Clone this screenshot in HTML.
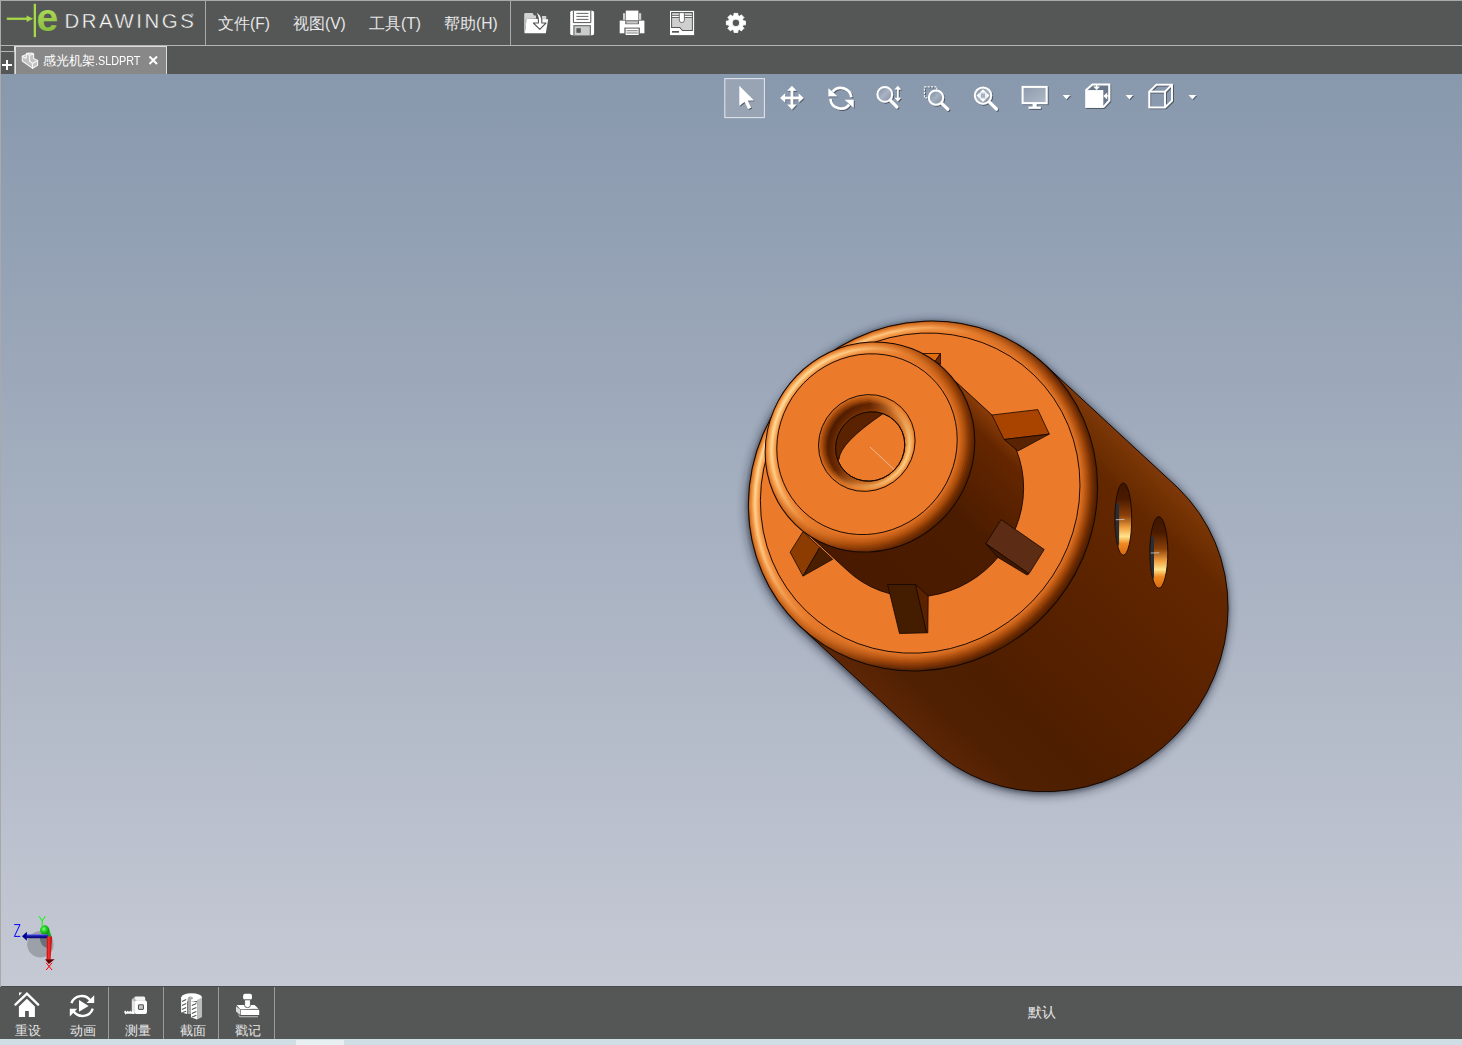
<!DOCTYPE html>
<html><head><meta charset="utf-8">
<style>
html,body{margin:0;padding:0;}
body{width:1462px;height:1045px;position:relative;overflow:hidden;background:#555756;font-family:"Liberation Sans",sans-serif;}
.abs{position:absolute;}
#topborder{left:0;top:0;width:1462px;height:1px;background:#a9a9a9;}
#leftborder{left:0;top:0;width:1px;height:987px;background:#a9a9a9;}
#sep1{left:205px;top:1px;width:1px;height:44px;background:#aaaaaa;}
#sep2{left:510px;top:1px;width:1px;height:44px;background:#aaaaaa;}
#hline{left:0;top:45px;width:1462px;height:1px;background:#b4b4b4;}
.menu{top:14px;color:#e6e6e6;font-size:15.6px;line-height:20px;white-space:nowrap;}
#tab{left:14px;top:46px;width:153px;height:28px;background:#888888;border-left:2px solid #dedede;border-right:1px solid #dcdcdc;border-top:1px solid #dcdcdc;box-sizing:border-box;}
#plustab{left:1px;top:51px;width:14px;height:23px;border-top:1px solid #b4b4b4;border-right:1px solid #b4b4b4;border-top-right-radius:2px;box-sizing:border-box;}
#viewport{left:1px;top:74px;width:1461px;height:912px;background:linear-gradient(#8898ad 0%,#c5c9d4 100%);}
#bottombar{left:1px;top:986px;width:1461px;height:53px;background:#555756;border-top:1px solid #4a4c4b;box-sizing:border-box;}
#bstrip{left:0;top:1039px;width:1462px;height:6px;background:#cfdde5;}
.bsep{top:987px;width:1px;height:52px;background:#9a9a9a;}
.blabel{top:1022px;color:#e8e8e8;font-size:13px;line-height:17px;white-space:nowrap;}
</style></head><body>
<div id="topborder" class="abs"></div>
<div id="leftborder" class="abs"></div>
<div id="sep1" class="abs"></div>
<div id="sep2" class="abs"></div>
<div id="hline" class="abs"></div>

<svg class="abs" style="left:0;top:0" width="205" height="45" viewBox="0 0 205 45">
  <defs>
    <linearGradient id="eg" x1="0" y1="0" x2="0" y2="1">
      <stop offset="0" stop-color="#c0ec64"/>
      <stop offset="1" stop-color="#7eb236"/>
    </linearGradient>
  </defs>
  <rect x="6.8" y="17.6" width="21" height="2.3" fill="#a6d84a"/>
  <path d="M26.6 15.6 L33.2 18.75 L26.6 21.9 Z" fill="#a6d84a"/>
  <rect x="33.7" y="3.8" width="2.3" height="33.3" fill="#a6d84a"/>
  <text x="36.5" y="31" font-family="Liberation Sans" font-weight="bold" font-size="39" fill="url(#eg)">e</text>
  <text x="64.5" y="28" font-family="Liberation Sans" font-size="20.4" fill="#ffffff" stroke="#555756" stroke-width="0.45" letter-spacing="2.55">DRAWINGS</text>
  <circle cx="192" cy="14.8" r="1.6" fill="#9a9a9a"/>
</svg>
<div class="abs menu" style="left:218px">文件(F)</div>
<div class="abs menu" style="left:293px">视图(V)</div>
<div class="abs menu" style="left:369px">工具(T)</div>
<div class="abs menu" style="left:444px">帮助(H)</div>

<!--TOPICONS--><svg class="abs" style="left:515px;top:0" width="250" height="45" viewBox="515 0 250 45">
  <!-- open folder -->
  <g>
    <path d="M524.2 33.2 L524.2 14.2 Q524.2 13 525.4 13 L532.6 13 L534 15.6 L536 15.6 L536 18.6 L527 18.6 Z" fill="#d2d2d2"/>
    <path d="M541.8 16 L546.2 16 L546.2 19 L541.8 19 Z" fill="#d2d2d2"/>
    <path d="M526.6 18.4 L548.2 19.2 L545.8 33.2 L524.8 33.2 Z" fill="#ffffff"/>
    <path d="M524.6 18.6 L526.6 18.4 L524.8 33.2 L524.2 33.2 Z" fill="#bdbdbd"/>
    <path d="M535.2 11.6 Q542.8 14.5 541.8 23 L546 23 L539.8 29.4 L533.4 23 L538.4 23 Q539 16.5 535.2 11.6 Z" fill="#ffffff" stroke="#555756" stroke-width="1.1" stroke-linejoin="round"/>
  </g>
  <!-- save -->
  <g>
    <rect x="570.2" y="10.8" width="23.9" height="24.4" rx="1.8" fill="#ffffff"/>
    <path d="M573.4 10.8 L573.4 22.6 L590.8 22.6 L590.8 10.8" fill="none" stroke="#555756" stroke-width="1"/>
    <rect x="573.4" y="25.2" width="17.4" height="10" fill="#555756"/>
    <rect x="574.4" y="26.2" width="15.4" height="9" fill="#cbcbcb"/>
    <rect x="576.4" y="28.2" width="4.4" height="4.6" fill="#555756"/>
    <rect x="576.4" y="12.9" width="12" height="0.9" fill="#555756"/>
    <rect x="576.4" y="15.9" width="12" height="0.9" fill="#555756"/>
    <rect x="576.4" y="18.9" width="12" height="0.9" fill="#555756"/>
  </g>
  <!-- print -->
  <g>
    <rect x="623" y="13.2" width="2.2" height="6.6" fill="#d0d0d0"/>
    <rect x="639" y="13.2" width="2.2" height="6.6" fill="#d0d0d0"/>
    <rect x="625.8" y="10.6" width="12.6" height="9.6" fill="#ffffff"/>
    <rect x="619.7" y="20.6" width="24.7" height="12.7" fill="#ffffff"/>
    <rect x="625.3" y="20.6" width="13.6" height="3.6" fill="#555756"/>
    <rect x="626.3" y="21.2" width="11.6" height="2.4" fill="#c8c8c8"/>
    <rect x="624.4" y="27.6" width="15.4" height="7.7" fill="#555756"/>
    <rect x="625.6" y="28.6" width="13" height="6.4" fill="#ffffff"/>
    <rect x="626.4" y="30.4" width="11.4" height="0.8" fill="#555756"/>
    <rect x="626.4" y="32.6" width="11.4" height="0.8" fill="#555756"/>
  </g>
  <!-- 3d print -->
  <g>
    <rect x="670" y="10.9" width="24.1" height="24.2" fill="#ffffff"/>
    <path d="M671.1 12.1 L692.9 12.1 L692.9 30.9 L682.2 30.9 L679.6 28 L671.1 28 Z" fill="#555756"/>
    <rect x="672.1" y="13.1" width="19.8" height="2.1" fill="#cfcfcf"/>
    <rect x="672.1" y="15.9" width="19.8" height="1.2" fill="#ffffff"/>
    <path d="M672.1 17.9 L691.9 17.9 L691.9 29.9 L682.6 29.9 L680 27 L672.1 27 Z" fill="#cfcfcf"/>
    <path d="M679.3 12.6 L684.4 12.6 L684.4 20 Q684.4 22.6 681.85 22.6 Q679.3 22.6 679.3 20 Z" fill="#ffffff" stroke="#555756" stroke-width="0.8"/>
    <rect x="672" y="31" width="7" height="1.7" fill="#555756"/>
  </g>
  <!-- gear -->
  <g transform="translate(735.9 22.9)">
    <path d="M7.34 -1.95 L9.51 -1.93 L9.51 1.93 L7.34 1.95 L6.57 3.81 L8.08 5.36 L5.36 8.08 L3.81 6.57 L1.95 7.34 L1.93 9.51 L-1.93 9.51 L-1.95 7.34 L-3.81 6.57 L-5.36 8.08 L-8.08 5.36 L-6.57 3.81 L-7.34 1.95 L-9.51 1.93 L-9.51 -1.93 L-7.34 -1.95 L-6.57 -3.81 L-8.08 -5.36 L-5.36 -8.08 L-3.81 -6.57 L-1.95 -7.34 L-1.93 -9.51 L1.93 -9.51 L1.95 -7.34 L3.81 -6.57 L5.36 -8.08 L8.08 -5.36 L6.57 -3.81 Z M3.8 0 A3.8 3.8 0 1 0 -3.8 0 A3.8 3.8 0 1 0 3.8 0 Z" fill="#ffffff" fill-rule="evenodd" stroke="#ffffff" stroke-width="0.9" stroke-linejoin="round"/>
  </g>
</svg><!--/TOPICONS-->
<div id="tab" class="abs"></div>
<div id="plustab" class="abs"></div>
<div class="abs" style="left:2px;top:64px;width:10px;height:2px;background:#fff"></div>
<div class="abs" style="left:6px;top:60px;width:2px;height:10px;background:#fff"></div>
<svg class="abs" style="left:18px;top:49px" width="24" height="24" viewBox="0 0 24 24">
  <g stroke="#f6f6f6" stroke-width="1.1" stroke-linejoin="round" stroke-linecap="round" fill="none">
    <path d="M4.3 7.2 L8.3 5.6 L8.6 4.4 L13.8 4.1 L15.6 5 L15.6 9.6 L19.6 11.6 L19.6 16.2 L14.6 19.4 L4.3 12 Z" fill="#c2c2c2"/>
    <path d="M8.6 4.6 L11.6 6.2 L15.6 5 M11.6 6.2 L11.6 12.2 L14.4 14.4 L19.6 11.6 M14.4 14.4 L14.6 19.4 M4.3 7.2 L7.5 9.2 L8.4 8.6 L8.3 5.6"/>
  </g>
</svg>
<div class="abs" style="left:43px;top:52px;font-size:12.5px;line-height:18px;color:#ffffff;white-space:nowrap">感光机架<span style="display:inline-block;font-size:13.5px;transform:scaleX(0.8);transform-origin:0 50%">.SLDPRT</span></div>
<svg class="abs" style="left:148px;top:55px" width="11" height="11" viewBox="0 0 11 11"><path d="M1.5 1.5 L9 9 M9 1.5 L1.5 9" stroke="#fff" stroke-width="2"/></svg>

<div id="viewport" class="abs"></div>
<!--MODEL--><svg class="abs" style="left:0;top:0" width="1462" height="1045" viewBox="0 0 1462 1045">
<defs><linearGradient id="gBody" gradientUnits="userSpaceOnUse" x1="1178.0" y1="487.9" x2="929.4" y2="746.1"><stop offset="0" stop-color="#80380a"/><stop offset="0.035" stop-color="#763404"/><stop offset="0.12" stop-color="#642800"/><stop offset="0.4" stop-color="#5a2200"/><stop offset="0.75" stop-color="#4e1e00"/><stop offset="0.9" stop-color="#502002"/><stop offset="1" stop-color="#5c2606"/></linearGradient>
<linearGradient id="gNeck" gradientUnits="userSpaceOnUse" x1="994.1" y1="417.0" x2="846.9" y2="570.0"><stop offset="0" stop-color="#8a3c08"/><stop offset="0.1" stop-color="#642600"/><stop offset="0.45" stop-color="#4c1c00"/><stop offset="1" stop-color="#4a1a00"/></linearGradient>
<filter id="fShadow2" x="-20%" y="-20%" width="140%" height="140%"><feGaussianBlur stdDeviation="2.2"/></filter>
<filter id="fShadow" x="-20%" y="-20%" width="140%" height="140%"><feGaussianBlur stdDeviation="5.5"/></filter>
<clipPath id="cHole"><ellipse cx="870.20" cy="446.50" rx="35.50" ry="33.73" transform="rotate(-46.1 870.20 446.50)" /></clipPath>
<linearGradient id="rg1" gradientUnits="userSpaceOnUse" x1="878.2" y1="316.8" x2="967.8" y2="675.2"><stop offset="0.0" stop-color="#d06a1c"/><stop offset="0.2" stop-color="#c86418"/><stop offset="0.4" stop-color="#b85810"/><stop offset="0.65" stop-color="#5a2404"/><stop offset="1.0" stop-color="#4a1c00"/></linearGradient>
<linearGradient id="rg2" gradientUnits="userSpaceOnUse" x1="878.3" y1="317.8" x2="967.2" y2="673.7"><stop offset="0.0" stop-color="#dd7c2d"/><stop offset="0.2" stop-color="#d47124"/><stop offset="0.4" stop-color="#c15f16"/><stop offset="0.65" stop-color="#6a2b05"/><stop offset="1.0" stop-color="#552000"/></linearGradient>
<linearGradient id="rg3" gradientUnits="userSpaceOnUse" x1="878.4" y1="318.9" x2="966.7" y2="672.2"><stop offset="0.0" stop-color="#e98e3d"/><stop offset="0.2" stop-color="#e07f30"/><stop offset="0.4" stop-color="#cb651c"/><stop offset="0.65" stop-color="#7a3307"/><stop offset="1.0" stop-color="#5f2400"/></linearGradient>
<linearGradient id="rg4" gradientUnits="userSpaceOnUse" x1="878.4" y1="319.9" x2="966.1" y2="670.7"><stop offset="0.0" stop-color="#f6a04e"/><stop offset="0.2" stop-color="#ec8c3c"/><stop offset="0.4" stop-color="#d46c22"/><stop offset="0.65" stop-color="#8a3a08"/><stop offset="1.0" stop-color="#6a2800"/></linearGradient>
<linearGradient id="rg5" gradientUnits="userSpaceOnUse" x1="878.5" y1="320.9" x2="965.6" y2="669.2"><stop offset="0.0" stop-color="#f9b66b"/><stop offset="0.2" stop-color="#f29e51"/><stop offset="0.4" stop-color="#d97125"/><stop offset="0.65" stop-color="#97410b"/><stop offset="1.0" stop-color="#7a3103"/></linearGradient>
<linearGradient id="rg6" gradientUnits="userSpaceOnUse" x1="878.6" y1="321.9" x2="965.1" y2="667.7"><stop offset="0.0" stop-color="#fccc87"/><stop offset="0.2" stop-color="#f9b065"/><stop offset="0.4" stop-color="#df7729"/><stop offset="0.65" stop-color="#a3490d"/><stop offset="1.0" stop-color="#8a3b05"/></linearGradient>
<linearGradient id="rg7" gradientUnits="userSpaceOnUse" x1="878.7" y1="323.0" x2="964.5" y2="666.1"><stop offset="0.0" stop-color="#ffe2a4"/><stop offset="0.2" stop-color="#ffc27a"/><stop offset="0.4" stop-color="#e47c2c"/><stop offset="0.65" stop-color="#b05010"/><stop offset="1.0" stop-color="#9a4408"/></linearGradient>
<linearGradient id="rg8" gradientUnits="userSpaceOnUse" x1="878.8" y1="324.0" x2="964.0" y2="664.6"><stop offset="0.0" stop-color="#fdd38f"/><stop offset="0.2" stop-color="#fbb56a"/><stop offset="0.4" stop-color="#e57b2b"/><stop offset="0.65" stop-color="#bb5915"/><stop offset="1.0" stop-color="#a94d0d"/></linearGradient>
<linearGradient id="rg9" gradientUnits="userSpaceOnUse" x1="878.9" y1="325.0" x2="963.4" y2="663.1"><stop offset="0.0" stop-color="#fcc37b"/><stop offset="0.2" stop-color="#f7a75a"/><stop offset="0.4" stop-color="#e77b2b"/><stop offset="0.65" stop-color="#c5611b"/><stop offset="1.0" stop-color="#b95713"/></linearGradient>
<linearGradient id="rg10" gradientUnits="userSpaceOnUse" x1="879.0" y1="326.0" x2="962.9" y2="661.6"><stop offset="0.0" stop-color="#fab466"/><stop offset="0.2" stop-color="#f39a4a"/><stop offset="0.4" stop-color="#e87a2a"/><stop offset="0.65" stop-color="#d06a20"/><stop offset="1.0" stop-color="#c86018"/></linearGradient>
<linearGradient id="rg11" gradientUnits="userSpaceOnUse" x1="879.0" y1="327.1" x2="962.3" y2="660.1"><stop offset="0.0" stop-color="#f5a153"/><stop offset="0.2" stop-color="#f18f40"/><stop offset="0.4" stop-color="#e97a2a"/><stop offset="0.65" stop-color="#d86f23"/><stop offset="1.0" stop-color="#d3681e"/></linearGradient>
<linearGradient id="rg12" gradientUnits="userSpaceOnUse" x1="879.1" y1="328.1" x2="961.8" y2="658.6"><stop offset="0.0" stop-color="#f18f3f"/><stop offset="0.2" stop-color="#ee8535"/><stop offset="0.4" stop-color="#eb7a2b"/><stop offset="0.65" stop-color="#e07327"/><stop offset="1.0" stop-color="#dd7024"/></linearGradient>
<linearGradient id="rg13" gradientUnits="userSpaceOnUse" x1="879.2" y1="329.1" x2="961.2" y2="657.1"><stop offset="0.0" stop-color="#ec7c2c"/><stop offset="0.2" stop-color="#ec7a2b"/><stop offset="0.4" stop-color="#ec7a2b"/><stop offset="0.65" stop-color="#e8782a"/><stop offset="1.0" stop-color="#e8782a"/></linearGradient>
<linearGradient id="rg14" gradientUnits="userSpaceOnUse" x1="843.1" y1="339.4" x2="896.9" y2="554.6"><stop offset="0.0" stop-color="#e27626"/><stop offset="0.2" stop-color="#dc7020"/><stop offset="0.42" stop-color="#c45e16"/><stop offset="0.65" stop-color="#7a3006"/><stop offset="1.0" stop-color="#4a1c00"/></linearGradient>
<linearGradient id="rg15" gradientUnits="userSpaceOnUse" x1="843.2" y1="340.6" x2="896.2" y2="552.8"><stop offset="0.0" stop-color="#ec8f3d"/><stop offset="0.2" stop-color="#e68232"/><stop offset="0.42" stop-color="#cc651c"/><stop offset="0.65" stop-color="#893a07"/><stop offset="1.0" stop-color="#572100"/></linearGradient>
<linearGradient id="rg16" gradientUnits="userSpaceOnUse" x1="843.2" y1="341.8" x2="895.5" y2="551.0"><stop offset="0.0" stop-color="#f5a854"/><stop offset="0.2" stop-color="#ef9343"/><stop offset="0.42" stop-color="#d46c21"/><stop offset="0.65" stop-color="#984308"/><stop offset="1.0" stop-color="#642600"/></linearGradient>
<linearGradient id="rg17" gradientUnits="userSpaceOnUse" x1="843.3" y1="343.1" x2="894.9" y2="549.3"><stop offset="0.0" stop-color="#fbbd6e"/><stop offset="0.2" stop-color="#f6a556"/><stop offset="0.42" stop-color="#db7326"/><stop offset="0.65" stop-color="#a64c0a"/><stop offset="1.0" stop-color="#752e02"/></linearGradient>
<linearGradient id="rg18" gradientUnits="userSpaceOnUse" x1="843.4" y1="344.3" x2="894.2" y2="547.5"><stop offset="0.0" stop-color="#fdd089"/><stop offset="0.2" stop-color="#fbb66b"/><stop offset="0.42" stop-color="#e07a2b"/><stop offset="0.65" stop-color="#b3530f"/><stop offset="1.0" stop-color="#8a3b05"/></linearGradient>
<linearGradient id="rg19" gradientUnits="userSpaceOnUse" x1="843.5" y1="345.5" x2="893.5" y2="545.7"><stop offset="0.0" stop-color="#ffe2a4"/><stop offset="0.2" stop-color="#ffc880"/><stop offset="0.42" stop-color="#e68030"/><stop offset="0.65" stop-color="#c05a14"/><stop offset="1.0" stop-color="#a04808"/></linearGradient>
<linearGradient id="rg20" gradientUnits="userSpaceOnUse" x1="843.6" y1="346.7" x2="892.9" y2="543.9"><stop offset="0.0" stop-color="#fcd08a"/><stop offset="0.2" stop-color="#fbb66b"/><stop offset="0.42" stop-color="#e77e2e"/><stop offset="0.65" stop-color="#ca6119"/><stop offset="1.0" stop-color="#b0520e"/></linearGradient>
<linearGradient id="rg21" gradientUnits="userSpaceOnUse" x1="843.6" y1="347.9" x2="892.2" y2="542.1"><stop offset="0.0" stop-color="#f9bd71"/><stop offset="0.2" stop-color="#f6a556"/><stop offset="0.42" stop-color="#e87d2d"/><stop offset="0.65" stop-color="#d3681e"/><stop offset="1.0" stop-color="#c05b15"/></linearGradient>
<linearGradient id="rg22" gradientUnits="userSpaceOnUse" x1="843.7" y1="349.2" x2="891.5" y2="540.4"><stop offset="0.0" stop-color="#f6a959"/><stop offset="0.2" stop-color="#f29545"/><stop offset="0.42" stop-color="#e97c2c"/><stop offset="0.65" stop-color="#db6e22"/><stop offset="1.0" stop-color="#ce651c"/></linearGradient>
<linearGradient id="rg23" gradientUnits="userSpaceOnUse" x1="843.8" y1="350.4" x2="890.8" y2="538.6"><stop offset="0.0" stop-color="#f19242"/><stop offset="0.2" stop-color="#ef8838"/><stop offset="0.42" stop-color="#ea7b2b"/><stop offset="0.65" stop-color="#e27326"/><stop offset="1.0" stop-color="#db6e23"/></linearGradient>
<linearGradient id="rg24" gradientUnits="userSpaceOnUse" x1="843.9" y1="351.6" x2="890.1" y2="536.8"><stop offset="0.0" stop-color="#ec7c2c"/><stop offset="0.2" stop-color="#ec7a2b"/><stop offset="0.42" stop-color="#ec7a2b"/><stop offset="0.65" stop-color="#e8782a"/><stop offset="1.0" stop-color="#e8782a"/></linearGradient>
<linearGradient id="rg25" gradientUnits="userSpaceOnUse" x1="851.9" y1="393.4" x2="881.7" y2="492.6"><stop offset="0.0" stop-color="#c8621a"/><stop offset="0.3" stop-color="#d8701e"/><stop offset="0.6" stop-color="#e47826"/><stop offset="1.0" stop-color="#e87a28"/></linearGradient>
<linearGradient id="rg26" gradientUnits="userSpaceOnUse" x1="852.6" y1="394.9" x2="881.6" y2="491.7"><stop offset="0.0" stop-color="#b35513"/><stop offset="0.3" stop-color="#c86418"/><stop offset="0.6" stop-color="#e57e2c"/><stop offset="1.0" stop-color="#ed8c3b"/></linearGradient>
<linearGradient id="rg27" gradientUnits="userSpaceOnUse" x1="853.2" y1="396.3" x2="881.5" y2="490.8"><stop offset="0.0" stop-color="#9f470d"/><stop offset="0.3" stop-color="#b85812"/><stop offset="0.6" stop-color="#e78432"/><stop offset="1.0" stop-color="#f39e4d"/></linearGradient>
<linearGradient id="rg28" gradientUnits="userSpaceOnUse" x1="853.8" y1="397.8" x2="881.5" y2="489.9"><stop offset="0.0" stop-color="#8a3a06"/><stop offset="0.3" stop-color="#a84c0c"/><stop offset="0.6" stop-color="#e88a38"/><stop offset="1.0" stop-color="#f8b060"/></linearGradient>
<linearGradient id="rg29" gradientUnits="userSpaceOnUse" x1="854.5" y1="399.3" x2="881.4" y2="489.1"><stop offset="0.0" stop-color="#752f04"/><stop offset="0.3" stop-color="#913f08"/><stop offset="0.6" stop-color="#e38738"/><stop offset="1.0" stop-color="#fabd70"/></linearGradient>
<linearGradient id="rg30" gradientUnits="userSpaceOnUse" x1="855.1" y1="400.7" x2="881.3" y2="488.2"><stop offset="0.0" stop-color="#5f2502"/><stop offset="0.3" stop-color="#793104"/><stop offset="0.6" stop-color="#dd8338"/><stop offset="1.0" stop-color="#fdcb80"/></linearGradient>
<linearGradient id="rg31" gradientUnits="userSpaceOnUse" x1="855.7" y1="402.2" x2="881.3" y2="487.3"><stop offset="0.0" stop-color="#4a1a00"/><stop offset="0.3" stop-color="#622400"/><stop offset="0.6" stop-color="#d88038"/><stop offset="1.0" stop-color="#ffd890"/></linearGradient>
<linearGradient id="rg32" gradientUnits="userSpaceOnUse" x1="856.4" y1="403.7" x2="881.2" y2="486.4"><stop offset="0.0" stop-color="#4f1d00"/><stop offset="0.3" stop-color="#662601"/><stop offset="0.6" stop-color="#d37930"/><stop offset="1.0" stop-color="#fdc87b"/></linearGradient>
<linearGradient id="rg33" gradientUnits="userSpaceOnUse" x1="857.0" y1="405.1" x2="881.1" y2="485.5"><stop offset="0.0" stop-color="#551f00"/><stop offset="0.3" stop-color="#6a2801"/><stop offset="0.6" stop-color="#cd7128"/><stop offset="1.0" stop-color="#fab865"/></linearGradient>
<linearGradient id="rg34" gradientUnits="userSpaceOnUse" x1="857.6" y1="406.6" x2="881.1" y2="484.6"><stop offset="0.0" stop-color="#5a2200"/><stop offset="0.3" stop-color="#6e2a02"/><stop offset="0.6" stop-color="#c86a20"/><stop offset="1.0" stop-color="#f8a850"/></linearGradient>
<linearGradient id="rg35" gradientUnits="userSpaceOnUse" x1="858.3" y1="408.1" x2="881.0" y2="483.8"><stop offset="0.0" stop-color="#652701"/><stop offset="0.3" stop-color="#772f04"/><stop offset="0.6" stop-color="#c5651c"/><stop offset="1.0" stop-color="#f09540"/></linearGradient>
<linearGradient id="rg36" gradientUnits="userSpaceOnUse" x1="858.9" y1="409.5" x2="880.9" y2="482.9"><stop offset="0.0" stop-color="#6f2d03"/><stop offset="0.3" stop-color="#813506"/><stop offset="0.6" stop-color="#c36118"/><stop offset="1.0" stop-color="#e88330"/></linearGradient>
<linearGradient id="rg37" gradientUnits="userSpaceOnUse" x1="859.6" y1="411.0" x2="880.9" y2="482.0"><stop offset="0.0" stop-color="#7a3204"/><stop offset="0.3" stop-color="#8a3a08"/><stop offset="0.6" stop-color="#c05c14"/><stop offset="1.0" stop-color="#e07020"/></linearGradient>
<linearGradient id="gSlot" x1="0" y1="0" x2="0" y2="1"><stop offset="0" stop-color="#3e1600"/><stop offset="0.22" stop-color="#4a1a00"/><stop offset="0.45" stop-color="#8a4008"/><stop offset="0.62" stop-color="#f0a040"/><stop offset="0.74" stop-color="#ffe48c"/><stop offset="0.84" stop-color="#f08820"/><stop offset="1" stop-color="#d86810"/></linearGradient>
<clipPath id="cSlot0"><ellipse cx="1123.3" cy="519.1" rx="8.4" ry="36.1"/></clipPath>
<clipPath id="cSlot1"><ellipse cx="1158.8" cy="552.4" rx="9.0" ry="35.8"/></clipPath></defs>
<path d="M798.74 625.12 A179.20 170.24 -46.1 0 1 1047.26 366.88 L1177.96 487.88 A179.20 170.24 -46.1 0 1 929.44 746.12 Z" fill="#1e2430" opacity="0.85" filter="url(#fShadow)" transform="translate(-1 2)"/>
<path d="M798.74 625.12 A179.20 170.24 -46.1 0 1 1047.26 366.88 L1177.96 487.88 A179.20 170.24 -46.1 0 1 929.44 746.12 Z" fill="#1a1e28" opacity="0.45" filter="url(#fShadow2)"/>
<path d="M798.74 625.12 A179.20 170.24 -46.1 0 1 1047.26 366.88 L1177.96 487.88 A179.20 170.24 -46.1 0 1 929.44 746.12 Z" fill="url(#gBody)" stroke="#140800" stroke-width="1"/>
<ellipse cx="923.00" cy="496.00" rx="179.20" ry="170.24" transform="rotate(-46.1 923.00 496.00)" fill="url(#rg1)"/>
<ellipse cx="922.77" cy="495.76" rx="177.93" ry="169.04" transform="rotate(-46.1 922.77 495.76)" fill="url(#rg2)"/>
<ellipse cx="922.53" cy="495.52" rx="176.67" ry="167.83" transform="rotate(-46.1 922.53 495.52)" fill="url(#rg3)"/>
<ellipse cx="922.30" cy="495.27" rx="175.40" ry="166.63" transform="rotate(-46.1 922.30 495.27)" fill="url(#rg4)"/>
<ellipse cx="922.07" cy="495.03" rx="174.13" ry="165.43" transform="rotate(-46.1 922.07 495.03)" fill="url(#rg5)"/>
<ellipse cx="921.83" cy="494.79" rx="172.87" ry="164.22" transform="rotate(-46.1 921.83 494.79)" fill="url(#rg6)"/>
<ellipse cx="921.60" cy="494.55" rx="171.60" ry="163.02" transform="rotate(-46.1 921.60 494.55)" fill="url(#rg7)"/>
<ellipse cx="921.37" cy="494.31" rx="170.33" ry="161.82" transform="rotate(-46.1 921.37 494.31)" fill="url(#rg8)"/>
<ellipse cx="921.13" cy="494.07" rx="169.07" ry="160.61" transform="rotate(-46.1 921.13 494.07)" fill="url(#rg9)"/>
<ellipse cx="920.90" cy="493.83" rx="167.80" ry="159.41" transform="rotate(-46.1 920.90 493.83)" fill="url(#rg10)"/>
<ellipse cx="920.67" cy="493.58" rx="166.53" ry="158.21" transform="rotate(-46.1 920.67 493.58)" fill="url(#rg11)"/>
<ellipse cx="920.43" cy="493.34" rx="165.27" ry="157.00" transform="rotate(-46.1 920.43 493.34)" fill="url(#rg12)"/>
<ellipse cx="920.20" cy="493.10" rx="164.00" ry="155.80" transform="rotate(-46.1 920.20 493.10)" fill="url(#rg13)"/>
<ellipse cx="923.00" cy="496.00" rx="179.20" ry="170.24" transform="rotate(-46.1 923.00 496.00)" fill="none" stroke="#140800" stroke-width="1"/>
<ellipse cx="920.20" cy="493.10" rx="164.00" ry="155.80" transform="rotate(-46.1 920.20 493.10)" fill="#ec7a2b" stroke="#140800" stroke-width="0.9"/>
<path d="M796.36 523.52 A106.20 100.89 -46.1 0 1 943.64 370.48 L994.14 416.98 A106.20 100.89 -46.1 0 1 846.86 570.02 Z" fill="url(#gNeck)" stroke="#140800" stroke-width="0.9"/>
<polygon points="922.4,353.5 940.5,353.5 935.0,361.6" fill="#e06c10" stroke="#140800" stroke-width="0.8" stroke-linejoin="round"/>
<polygon points="940.5,353.5 940.5,364.4 935.0,361.6" fill="#6e2a02" stroke="#140800" stroke-width="0.8" stroke-linejoin="round"/>
<polygon points="991.9,415.0 1037.8,409.6 1049.3,434.1 1004.1,439.5" fill="#a84400" stroke="#140800" stroke-width="0.8" stroke-linejoin="round"/>
<polygon points="1004.1,439.5 1049.3,434.1 1017.9,451.0" fill="#5a2404" stroke="#140800" stroke-width="0.8" stroke-linejoin="round"/>
<polygon points="1001.1,519.5 1044.2,549.5 1029.0,573.7 985.8,543.7" fill="#5c2c14" stroke="#140800" stroke-width="0.8" stroke-linejoin="round"/>
<polygon points="985.8,543.7 1029.0,573.7 1027.0,575.0 997.9,557.4" fill="#3e1800" stroke="#140800" stroke-width="0.8" stroke-linejoin="round"/>
<polygon points="887.6,584.5 915.6,584.5 926.7,632.8 899.5,633.5" fill="#441c00" stroke="#140800" stroke-width="0.8" stroke-linejoin="round"/>
<polygon points="915.6,584.5 928.2,596.0 927.8,632.8 926.7,632.8" fill="#5c2200" stroke="#140800" stroke-width="0.8" stroke-linejoin="round"/>
<polygon points="803.0,531.6 819.8,547.4 803.0,576.1 790.1,552.2" fill="#8c3c00" stroke="#140800" stroke-width="0.8" stroke-linejoin="round"/>
<polygon points="819.8,547.4 832.7,559.3 803.0,576.1" fill="#4a1e00" stroke="#140800" stroke-width="0.8" stroke-linejoin="round"/>
<ellipse cx="870.00" cy="447.00" rx="107.60" ry="102.22" transform="rotate(-46.1 870.00 447.00)" fill="url(#rg14)"/>
<ellipse cx="869.70" cy="446.72" rx="106.10" ry="100.79" transform="rotate(-46.1 869.70 446.72)" fill="url(#rg15)"/>
<ellipse cx="869.40" cy="446.44" rx="104.60" ry="99.37" transform="rotate(-46.1 869.40 446.44)" fill="url(#rg16)"/>
<ellipse cx="869.10" cy="446.16" rx="103.10" ry="97.94" transform="rotate(-46.1 869.10 446.16)" fill="url(#rg17)"/>
<ellipse cx="868.80" cy="445.88" rx="101.60" ry="96.52" transform="rotate(-46.1 868.80 445.88)" fill="url(#rg18)"/>
<ellipse cx="868.50" cy="445.60" rx="100.10" ry="95.09" transform="rotate(-46.1 868.50 445.60)" fill="url(#rg19)"/>
<ellipse cx="868.20" cy="445.32" rx="98.60" ry="93.67" transform="rotate(-46.1 868.20 445.32)" fill="url(#rg20)"/>
<ellipse cx="867.90" cy="445.04" rx="97.10" ry="92.24" transform="rotate(-46.1 867.90 445.04)" fill="url(#rg21)"/>
<ellipse cx="867.60" cy="444.76" rx="95.60" ry="90.82" transform="rotate(-46.1 867.60 444.76)" fill="url(#rg22)"/>
<ellipse cx="867.30" cy="444.48" rx="94.10" ry="89.39" transform="rotate(-46.1 867.30 444.48)" fill="url(#rg23)"/>
<ellipse cx="867.00" cy="444.20" rx="92.60" ry="87.97" transform="rotate(-46.1 867.00 444.20)" fill="url(#rg24)"/>
<ellipse cx="870.00" cy="447.00" rx="107.60" ry="102.22" transform="rotate(-46.1 870.00 447.00)" fill="none" stroke="#140800" stroke-width="1"/>
<ellipse cx="867.00" cy="444.20" rx="92.60" ry="87.97" transform="rotate(-46.1 867.00 444.20)" fill="#ec7a2b" stroke="#140800" stroke-width="0.9"/>
<ellipse cx="866.80" cy="443.00" rx="49.60" ry="47.12" transform="rotate(-46.1 866.80 443.00)" fill="url(#rg25)"/>
<ellipse cx="867.08" cy="443.29" rx="48.43" ry="46.00" transform="rotate(-46.1 867.08 443.29)" fill="url(#rg26)"/>
<ellipse cx="867.37" cy="443.58" rx="47.25" ry="44.89" transform="rotate(-46.1 867.37 443.58)" fill="url(#rg27)"/>
<ellipse cx="867.65" cy="443.88" rx="46.08" ry="43.77" transform="rotate(-46.1 867.65 443.88)" fill="url(#rg28)"/>
<ellipse cx="867.93" cy="444.17" rx="44.90" ry="42.65" transform="rotate(-46.1 867.93 444.17)" fill="url(#rg29)"/>
<ellipse cx="868.22" cy="444.46" rx="43.73" ry="41.54" transform="rotate(-46.1 868.22 444.46)" fill="url(#rg30)"/>
<ellipse cx="868.50" cy="444.75" rx="42.55" ry="40.42" transform="rotate(-46.1 868.50 444.75)" fill="url(#rg31)"/>
<ellipse cx="868.78" cy="445.04" rx="41.38" ry="39.31" transform="rotate(-46.1 868.78 445.04)" fill="url(#rg32)"/>
<ellipse cx="869.07" cy="445.33" rx="40.20" ry="38.19" transform="rotate(-46.1 869.07 445.33)" fill="url(#rg33)"/>
<ellipse cx="869.35" cy="445.62" rx="39.02" ry="37.07" transform="rotate(-46.1 869.35 445.62)" fill="url(#rg34)"/>
<ellipse cx="869.63" cy="445.92" rx="37.85" ry="35.96" transform="rotate(-46.1 869.63 445.92)" fill="url(#rg35)"/>
<ellipse cx="869.92" cy="446.21" rx="36.67" ry="34.84" transform="rotate(-46.1 869.92 446.21)" fill="url(#rg36)"/>
<ellipse cx="870.20" cy="446.50" rx="35.50" ry="33.73" transform="rotate(-46.1 870.20 446.50)" fill="url(#rg37)"/>
<ellipse cx="866.80" cy="443.00" rx="49.60" ry="47.12" transform="rotate(-46.1 866.80 443.00)" fill="none" stroke="#140800" stroke-width="0.9"/>
<ellipse cx="870.20" cy="446.50" rx="35.50" ry="33.73" transform="rotate(-46.1 870.20 446.50)" fill="#ec7a2b" stroke="#140800" stroke-width="0.9"/>
<path clip-path="url(#cHole)" d="M882.7 413.9 Q840.15 442.85 839 459.2 L820 470 L800 400 L890 390 Z" fill="#5a2200" stroke="#140800" stroke-width="0.8"/>
<ellipse cx="870.20" cy="446.50" rx="35.50" ry="33.73" transform="rotate(-46.1 870.20 446.50)" fill="none" stroke="#140800" stroke-width="0.9"/>
<line x1="870" y1="447" x2="894" y2="469.4" stroke="#e8d8c8" stroke-width="0.7"/>
<ellipse cx="1123.3" cy="519.1" rx="8.4" ry="36.1" fill="url(#gSlot)"/>
<rect clip-path="url(#cSlot0)" x="1113.8999999999999" y="502.9" width="5.2" height="43.3" rx="2.5" fill="#2a2e34"/>
<line x1="1115.6999999999998" y1="519.7" x2="1124.3999999999999" y2="519.5" stroke="#d0d0d0" stroke-width="0.8"/>
<ellipse cx="1123.3" cy="519.1" rx="8.4" ry="36.1" fill="none" stroke="#140800" stroke-width="0.9"/>
<ellipse cx="1158.8" cy="552.4" rx="9.0" ry="35.8" fill="url(#gSlot)"/>
<rect clip-path="url(#cSlot1)" x="1148.8" y="536.3" width="5.2" height="43.0" rx="2.5" fill="#2a2e34"/>
<line x1="1150.6" y1="553.0" x2="1159.3" y2="552.8" stroke="#d0d0d0" stroke-width="0.8"/>
<ellipse cx="1158.8" cy="552.4" rx="9.0" ry="35.8" fill="none" stroke="#140800" stroke-width="0.9"/>
</svg><!--/MODEL-->
<!--TRIAD--><svg class="abs" style="left:0;top:905px" width="70" height="75" viewBox="0 905 70 75">
  <defs>
    <linearGradient id="tz" x1="0" y1="0" x2="0" y2="1"><stop offset="0" stop-color="#5050ff"/><stop offset="0.45" stop-color="#1a1aa0"/><stop offset="1" stop-color="#000070"/></linearGradient>
    <linearGradient id="tx" x1="0" y1="0" x2="1" y2="0"><stop offset="0" stop-color="#c00000"/><stop offset="0.4" stop-color="#ff3030"/><stop offset="1" stop-color="#b00000"/></linearGradient>
    <radialGradient id="ty" cx="0.4" cy="0.4" r="0.6"><stop offset="0" stop-color="#80ff80"/><stop offset="0.5" stop-color="#20d020"/><stop offset="1" stop-color="#109010"/></radialGradient>
  </defs>
  <circle cx="40.4" cy="944.2" r="13.2" fill="#9ca1a9"/>
  <path d="M48.6 936.6 L39.6 936.6 Q39.8 946.8 48 948.2 Z" fill="#6c7179"/>
  <!-- Y shaft -->
  <path d="M44 931 L49 929 L51.6 936.6 L47 938.4 Z" fill="#18b018"/>
  <circle cx="44.7" cy="929.9" r="4.6" fill="url(#ty)"/>
  <!-- Z arrow -->
  <path d="M26.6 934.4 L48.4 934.4 L48.4 938.2 L26.6 938.2 Z" fill="url(#tz)"/>
  <path d="M22 936.2 L26.9 931.8 L26.9 940.8 Z" fill="#000090"/>
  <!-- X arrow -->
  <path d="M47 936.4 L52 936.4 L50.6 959.6 L46.6 959.6 Z" fill="url(#tx)"/>
  <path d="M45 959.2 L54.7 959.2 L48.8 964.1 Z" fill="#6a0000"/>
  <!-- labels -->
  <path d="M14.2 924.6 L20 924.6 L14.4 936.4 L20.2 936.4" fill="none" stroke="#0000ff" stroke-width="1"/>
  <path d="M39 916.2 L42.2 921 L45.2 916.2 M42.2 921 L42.2 925.6" fill="none" stroke="#00ff00" stroke-width="1"/>
  <path d="M46.2 962.8 L52 970 M52 962.8 L46.2 970" fill="none" stroke="#ff0000" stroke-width="1"/>
</svg><!--/TRIAD-->
<!--VTOOLS--><svg class="abs" style="left:715px;top:74px" width="500" height="50" viewBox="715 74 500 50">
  <defs>
    <filter id="ish" x="-30%" y="-30%" width="160%" height="160%"><feGaussianBlur in="SourceAlpha" stdDeviation="0.7"/><feOffset dx="0.8" dy="0.9"/><feComponentTransfer><feFuncA type="linear" slope="0.45"/></feComponentTransfer><feMerge><feMergeNode/><feMergeNode in="SourceGraphic"/></feMerge></filter>
    <linearGradient id="lensg" x1="0" y1="0" x2="1" y2="1"><stop offset="0" stop-color="#7f8ea2"/><stop offset="0.5" stop-color="#a8b3c2"/><stop offset="1" stop-color="#7f8ea2"/></linearGradient>
    <linearGradient id="scrg" x1="0" y1="0" x2="1" y2="1"><stop offset="0" stop-color="#8e9bad"/><stop offset="1" stop-color="#b0b9c6"/></linearGradient>
  </defs>
  <!-- selected box -->
  <rect x="724.8" y="78.6" width="39.6" height="39" fill="#98a3b4" stroke="#dde2ea" stroke-width="1.1"/>
  <g filter="url(#ish)">
    <!-- cursor -->
    <path d="M739.3 85.8 L753.8 100.3 L747.6 100.6 L751.2 107.6 L748 109 L744.6 101.8 L739.3 105.8 Z" fill="#ffffff"/>
    <!-- move -->
    <g fill="#ffffff">
      <rect x="790.6" y="89" width="2.6" height="17.6"/>
      <rect x="783" y="96.6" width="17.6" height="2.6"/>
      <path d="M791.9 85.8 L796.6 90.8 L787.2 90.8 Z"/>
      <path d="M791.9 109.4 L796.6 104.4 L787.2 104.4 Z"/>
      <path d="M780.1 97.9 L785.1 93.2 L785.1 102.6 Z"/>
      <path d="M803.6 97.9 L798.6 93.2 L798.6 102.6 Z"/>
    </g>
    <!-- rotate -->
    <g fill="none" stroke="#ffffff" stroke-width="2.5">
      <path d="M832.6 91.6 A10.6 10.6 0 0 1 851.2 97.2"/>
      <path d="M849.2 104.6 A10.6 10.6 0 0 1 830.4 98.8"/>
    </g>
    <path d="M828.4 88.2 L837.4 96.2 L828.4 96.2 Z" fill="#ffffff"/>
    <path d="M853.6 107.8 L844.6 99.8 L853.6 99.8 Z" fill="#ffffff"/>
    <!-- zoom in/out -->
    <circle cx="884.8" cy="94.4" r="7.4" fill="url(#lensg)" stroke="#ffffff" stroke-width="2"/>
    <path d="M890.2 100.2 L896.8 106.8" stroke="#ffffff" stroke-width="3.2" stroke-linecap="round"/>
    <rect x="897" y="88" width="1.6" height="11.6" fill="#ffffff"/>
    <path d="M897.8 85.8 L901.2 89.6 L894.4 89.6 Z M897.8 101.6 L901.2 97.8 L894.4 97.8 Z" fill="#ffffff"/>
    <!-- zoom area -->
    <rect x="924.4" y="86.8" width="12.4" height="11" fill="none" stroke="#ffffff" stroke-width="1" stroke-dasharray="2 1.3"/>
    <circle cx="936" cy="97.6" r="7.2" fill="url(#lensg)" fill-opacity="0.9" stroke="#ffffff" stroke-width="2"/>
    <path d="M941.4 103.2 L947.8 109.2" stroke="#ffffff" stroke-width="3.2" stroke-linecap="round"/>
    <!-- zoom fit -->
    <circle cx="983" cy="95.6" r="8.2" fill="url(#lensg)" stroke="#ffffff" stroke-width="2"/>
    <path d="M989.2 101.8 L996.4 109" stroke="#ffffff" stroke-width="3.2" stroke-linecap="round"/>
    <path d="M983 89.2 L986.2 92.4 L979.8 92.4 Z M983 102 L986.2 98.8 L979.8 98.8 Z M976.6 95.6 L979.8 92.4 L979.8 98.8 Z M989.4 95.6 L986.2 92.4 L986.2 98.8 Z" fill="#ffffff"/>
    <rect x="980.4" y="93" width="5.2" height="5.2" fill="none" stroke="#ffffff" stroke-width="0.8"/>
    <!-- monitor -->
    <rect x="1022.6" y="86.9" width="24" height="16.2" fill="url(#scrg)" stroke="#ffffff" stroke-width="2"/>
    <rect x="1032.6" y="104" width="4" height="3.4" fill="#ffffff"/>
    <rect x="1028.5" y="106.6" width="12.3" height="2.2" fill="#ffffff"/>
    <path d="M1062.7 95.1 L1070.2 95.1 L1066.45 99.2 Z" fill="#ffffff"/>
    <!-- cube with arrows -->
    <path d="M1085.2 90.1 L1092.2 84 L1109.7 84 L1103.3 90.1 Z" fill="#6a788c"/>
    <path d="M1103.3 90.1 L1109.7 84 L1109.7 100.8 L1103.3 107.9 Z" fill="#6a788c"/>
    <rect x="1085.2" y="90.1" width="18.1" height="17.8" fill="#ffffff"/>
    <path d="M1085.6 90.6 L1092.4 84.6 L1109.2 84.6 L1109.2 100.6 L1103 107.4" fill="none" stroke="#ffffff" stroke-width="2"/>
    <path d="M1096.6 84 L1096.6 87.6" stroke="#ffffff" stroke-width="1.4"/>
    <path d="M1093.2 86.4 L1100 86.4 L1096.6 90.1 Z" fill="#ffffff"/>
    <path d="M1109.7 95.9 L1106 95.9" stroke="#ffffff" stroke-width="1.4"/>
    <path d="M1107.2 92.4 L1107.2 99.4 L1103.3 95.9 Z" fill="#ffffff"/>
    <path d="M1125.6 95.1 L1133.1 95.1 L1129.35 99.2 Z" fill="#ffffff"/>
    <!-- cube outline -->
    <g fill="none" stroke="#ffffff" stroke-width="1.9" stroke-linejoin="miter">
      <path d="M1149.2 91.6 L1156.4 84.6 L1172 84.6 L1172 100.6 L1165 107.4 L1149.2 107.4 Z"/>
      <path d="M1149.2 91.6 L1165 91.6 L1172 84.6 M1165 91.6 L1165 107.4"/>
    </g>
    <path d="M1188.5 95.1 L1196.3 95.1 L1192.4 99.2 Z" fill="#ffffff"/>
  </g>
</svg><!--/VTOOLS-->

<div id="bottombar" class="abs"></div>
<div id="bstrip" class="abs"></div>
<div class="abs" style="left:296px;top:1040px;width:48px;height:5px;background:#e8eff2"></div>
<div class="abs bsep" style="left:108px"></div>
<div class="abs bsep" style="left:163px"></div>
<div class="abs bsep" style="left:218px"></div>
<div class="abs bsep" style="left:274px"></div>
<!--BICONS--><svg class="abs" style="left:0;top:986px" width="280" height="40" viewBox="0 986 280 40">
  <!-- home -->
  <path d="M15.4 1004.6 L26.9 993.6 L38.2 1004.6" fill="none" stroke="#ffffff" stroke-width="2.3" stroke-linecap="round" stroke-linejoin="miter"/>
  <path d="M19 992.6 L22.2 992.6 L19 995.8 Z" fill="#ffffff"/>
  <path d="M18.9 1006.5 L26.9 998.8 L34.9 1006.5 L34.9 1016.9 L28.8 1016.9 L28.8 1011 L25.1 1011 L25.1 1016.9 L18.9 1016.9 Z" fill="#ffffff"/>
  <!-- animate -->
  <g fill="none" stroke="#ffffff" stroke-width="2.4">
    <path d="M71.4 1003.2 A10.9 10.9 0 0 1 90.6 1000.8"/>
    <path d="M92.8 1008.6 A10.9 10.9 0 0 1 73.4 1011"/>
  </g>
  <path d="M94.2 995.2 L94.2 1003 L86.6 1003 Z" fill="#ffffff"/>
  <path d="M69.8 1016.4 L69.8 1008.8 L77.2 1008.8 Z" fill="#ffffff"/>
  <path d="M79 1000 L79 1011.7 L88.6 1005.9 Z" fill="#ffffff"/>
  <!-- measure -->
  <path d="M134.4 997.6 Q134.6 996.4 136 996.4 L143.8 996.4 Q145.2 996.6 145.2 998 L145.2 1000.4 L134.4 1000.4 Z" fill="#f2f2f2"/>
  <rect x="131.8" y="999" width="3" height="15" rx="0.8" fill="#e6e6e6"/>
  <circle cx="133.9" cy="999.4" r="1.6" fill="#b8b8b8"/>
  <rect x="134.6" y="1000.2" width="12.4" height="13.8" rx="2.6" fill="#ffffff"/>
  <rect x="137.9" y="1004.2" width="6.1" height="5.8" rx="1.4" fill="#555756"/>
  <rect x="139" y="1005.3" width="3.9" height="3.6" fill="#c4c4c4"/>
  <path d="M124 1011.8 L125.6 1010.6 L126.4 1012 L128 1010.6 L128.8 1012 L130.4 1010.6 L131.2 1012 L132.8 1010.6 L133.8 1012 L134.4 1013.8 L126.2 1013.8 L125.6 1014.8 Z" fill="#ffffff"/>
  <!-- section -->
  <ellipse cx="191.6" cy="997.4" rx="10.4" ry="4.2" fill="#ffffff"/>
  <ellipse cx="190.4" cy="998" rx="2.6" ry="1.6" fill="#aaaaaa"/>
  <path d="M197.1 1000 L202 997.4 L202 1017 L197.1 1019.4 Z" fill="#bdbdbd"/>
  <rect x="187.6" y="998.6" width="3.4" height="15.4" fill="#a8a8a8"/>
  <path d="M181.1 997.2 L187 998.2 L187 1013.9 L181.1 1012.2 Z" fill="#ffffff"/>
  <path d="M191 1001.2 L197.1 1002.4 L197.1 1019.4 L191 1017.2 Z" fill="#ffffff"/>
  <g stroke="#555756" stroke-width="1.1">
    <path d="M182 1001.6 L186.2 999.4 M182 1005.6 L186.2 1003.4 M182 1009.6 L186.2 1007.4 M182.4 1012.6 L186.2 1011.2"/>
    <path d="M191.8 1005.6 L196.4 1003.4 M191.8 1009.6 L196.4 1007.4 M191.8 1013.6 L196.4 1011.4 M192.2 1017 L196.4 1015.2"/>
  </g>
  <!-- stamp -->
  <rect x="243.1" y="993.7" width="8.9" height="6" rx="2" fill="#ffffff"/>
  <path d="M236.7 1004.9 L254.6 1004.9 L258.5 1008.8 L240.3 1009.2 Z" fill="#ffffff"/>
  <path d="M244.6 999.8 L250.4 999.8 L250.4 1005.4 Q250.4 1007.6 247.5 1007.6 Q244.6 1007.6 244.6 1005.4 Z" fill="#ffffff" stroke="#555756" stroke-width="0.9"/>
  <path d="M236 1006.2 L240.2 1009.6 L240.2 1015 L236 1011.4 Z" fill="#d8d8d8"/>
  <rect x="240.8" y="1009.8" width="18.4" height="5.2" fill="#ffffff"/>
  <path d="M237.2 1013.6 L240.2 1016.2 L258 1016.2 L258 1017.2 L239.8 1017.2 Z" fill="#c8c8c8"/>
</svg><!--/BICONS-->
<div class="abs blabel" style="left:15px">重设</div>
<div class="abs blabel" style="left:70px">动画</div>
<div class="abs blabel" style="left:125px">测量</div>
<div class="abs blabel" style="left:180px">截面</div>
<div class="abs blabel" style="left:235px">戳记</div>
<div class="abs blabel" style="left:1028px;top:1004px;font-size:14px">默认</div>
</body></html>
